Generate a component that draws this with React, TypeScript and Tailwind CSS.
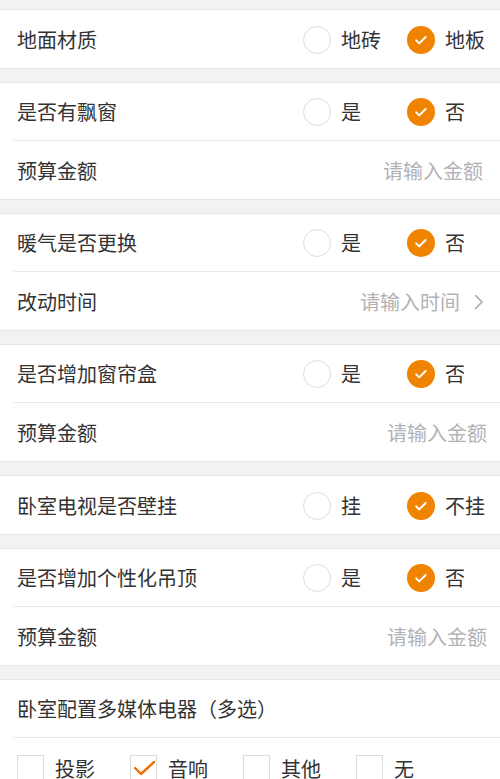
type Opt = { label: string; on?: boolean };

const font = { fontFamily: '"Noto Sans CJK SC", "Noto Sans", sans-serif' };

const Radio = ({ on }: { on?: boolean }) =>
  on ? (
    <span className="flex h-[28px] w-[28px] shrink-0 items-center justify-center rounded-full bg-[#f08300]">
      <svg width="16" height="16" viewBox="0 0 16 16" fill="none">
        <path d="M3.2 8.4l3 3L12.6 5" stroke="#fff" strokeWidth="2" strokeLinecap="round" strokeLinejoin="round" />
      </svg>
    </span>
  ) : (
    <span className="h-[28px] w-[28px] shrink-0 rounded-full border-[1.5px] border-[#dcdcdf] bg-white" />
  );

const RadioRow = ({ title, opts, divider }: { title: string; opts: Opt[]; divider?: boolean }) => (
  <div className="pl-[14px]">
    <div className={`flex h-[58px] items-center pt-[1px] ${divider ? "border-b border-[#e8e8e8]" : ""}`}>
      <span className="pl-[3px] text-[20px] text-[#333]">{title}</span>
      <div className="ml-auto flex w-[197px] shrink-0">
        {opts.map((o) => (
          <div key={o.label} className="flex w-[104px] shrink-0 items-center gap-[10px] last:w-[93px]">
            <Radio on={o.on} />
            <span className="whitespace-nowrap text-[20px] text-[#333]">{o.label}</span>
          </div>
        ))}
      </div>
    </div>
  </div>
);

const InputRow = ({ title, hint, arrow, pr = "pr-[13px]" }: { title: string; hint: string; arrow?: boolean; pr?: string }) => (
  <div className={`flex h-[58px] items-center pl-[17px] pt-[1px] ${pr}`}>
    <span className="text-[20px] text-[#333]">{title}</span>
    <span className="ml-auto text-[20px] text-[#b2b2b6]">{hint}</span>
    {arrow && (
      <svg className="ml-[14px]" width="10" height="16" viewBox="0 0 10 16" fill="none">
        <path d="M1.5 1.5L8 8l-6.5 6.5" stroke="#a8a8ad" strokeWidth="1.6" strokeLinecap="round" strokeLinejoin="round" />
      </svg>
    )}
  </div>
);

const Card = ({ children }: { children: React.ReactNode }) => (
  <section className="border-y border-[#e6e6e6] bg-white">{children}</section>
);

const Gap = () => <div className="h-[13px]" />;

const checks = [
  { label: "投影" },
  { label: "音响", on: true },
  { label: "其他" },
  { label: "无" },
];

export default function App() {
  return (
    <div className="h-[779px] overflow-hidden bg-[#f2f2f2] pt-[9px]" style={font}>
      <Card>
        <RadioRow title="地面材质" opts={[{ label: "地砖" }, { label: "地板", on: true }]} />
      </Card>
      <Gap />
      <Card>
        <RadioRow title="是否有飘窗" divider opts={[{ label: "是" }, { label: "否", on: true }]} />
        <InputRow title="预算金额" hint="请输入金额" pr="pr-[17px]" />
      </Card>
      <Gap />
      <Card>
        <RadioRow title="暖气是否更换" divider opts={[{ label: "是" }, { label: "否", on: true }]} />
        <InputRow title="改动时间" hint="请输入时间" arrow pr="pr-[16px]" />
      </Card>
      <Gap />
      <Card>
        <RadioRow title="是否增加窗帘盒" divider opts={[{ label: "是" }, { label: "否", on: true }]} />
        <InputRow title="预算金额" hint="请输入金额" />
      </Card>
      <Gap />
      <Card>
        <RadioRow title="卧室电视是否壁挂" opts={[{ label: "挂" }, { label: "不挂", on: true }]} />
      </Card>
      <Gap />
      <Card>
        <RadioRow title="是否增加个性化吊顶" divider opts={[{ label: "是" }, { label: "否", on: true }]} />
        <InputRow title="预算金额" hint="请输入金额" />
      </Card>
      <Gap />
      <Card>
        <div className="pl-[14px]">
          <div className="flex h-[58px] items-center border-b border-[#e8e8e8] pl-[3px] pt-[1px]">
            <span className="text-[20px] text-[#333]">卧室配置多媒体电器（多选）</span>
          </div>
        </div>
        <div className="flex pl-[17px] pt-[16px] pb-4">
          {checks.map((c) => (
            <div key={c.label} className="flex w-[113px] items-center gap-[11px]">
              <span className="relative h-[28px] w-[27px] border border-[#dcdcdf] bg-white">
                {c.on && (
                  <svg className="absolute left-[2px] top-[4px]" width="24" height="16" viewBox="0 0 24 16" fill="none">
                    <path d="M2 8l6 6L21 2" stroke="#f07000" strokeWidth="2.4" strokeLinecap="round" strokeLinejoin="round" />
                  </svg>
                )}
              </span>
              <span className="text-[20px] text-[#333]">{c.label}</span>
            </div>
          ))}
        </div>
      </Card>
    </div>
  );
}
